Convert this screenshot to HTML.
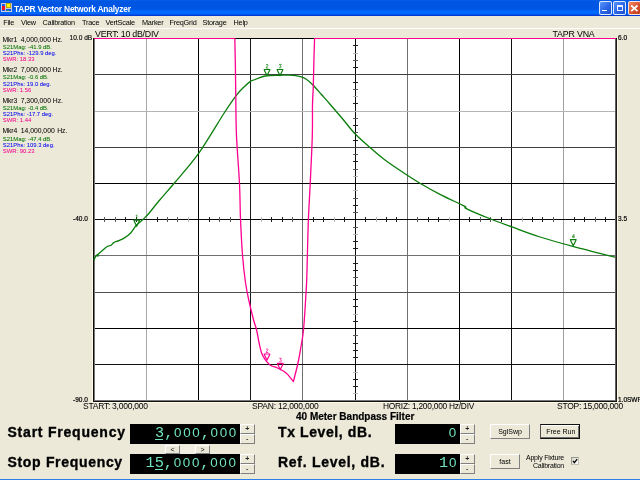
<!DOCTYPE html>
<html><head><meta charset="utf-8">
<style>
*{margin:0;padding:0;box-sizing:border-box}
html,body{width:640px;height:480px;overflow:hidden;background:#ece9d8;font-family:"Liberation Sans",sans-serif;position:relative}
.a{position:absolute;white-space:nowrap;line-height:1}
#title{position:absolute;left:0;top:0;width:640px;height:16px;background:linear-gradient(#0a64ea 0px,#0055e3 1px,#0055e3 9px,#0068fd 11px,#0068fd 14px,#003cd4 15px,#003cd4 16px)}
#ttext{left:14px;top:5px;color:#fff;font-weight:bold;font-size:8.4px;letter-spacing:-0.2px}
.menu{top:19.2px;font-size:7.3px;letter-spacing:-0.22px;color:#000}
#sep{position:absolute;left:0;top:28px;width:640px;height:1px;background:#fff}
.mk{font-size:7.3px;color:#000}
.s{font-size:5.8px}
.g{color:#007000}.b{color:#0000f0}.m{color:#f0008c}
.big{font-weight:bold;font-size:14px;color:#000;-webkit-text-stroke:0.35px #000}
.box{position:absolute;background:#000}
.dig{position:absolute;font-family:"Liberation Mono",monospace;color:#70e4c0;font-size:15.2px;line-height:1;white-space:nowrap}
.spin{position:absolute;background:#ece9d8}
.dc{display:inline-block;width:9.14px;text-align:center}
.z{font-family:"Liberation Sans",sans-serif;font-size:13.4px}
.btn{position:absolute;background:#ece9d8;border:1px solid #fff;border-right-color:#808080;border-bottom-color:#808080;font-size:7px;text-align:center}
.lbl{font-size:7.6px;color:#000}
</style></head><body><div id="wrap" style="position:absolute;left:0;top:0;width:640px;height:480px;overflow:hidden;will-change:transform">
<div id="title"></div>
<div class="a" id="ttext">TAPR Vector Network Analyzer</div>
<div class="a menu" style="left:3.2px">File</div>
<div class="a menu" style="left:21px">View</div>
<div class="a menu" style="left:42.5px">Calibration</div>
<div class="a menu" style="left:82px">Trace</div>
<div class="a menu" style="left:105.5px">VertScale</div>
<div class="a menu" style="left:142px">Marker</div>
<div class="a menu" style="left:169.5px">FreqGrid</div>
<div class="a menu" style="left:202.5px">Storage</div>
<div class="a menu" style="left:233.5px">Help</div>
<div id="sep"></div>

<div class="a" style="left:2.4px;top:36.50px;font-size:6.8px;letter-spacing:-0.1px;-webkit-text-stroke:0.04px #000">Mkr1</div>
<div class="a" style="left:20.7px;top:36.50px;font-size:6.8px;-webkit-text-stroke:0.04px #000">4,000,000</div>
<div class="a" style="left:52.5px;top:36.50px;font-size:6.8px;-webkit-text-stroke:0.04px #000">Hz.</div>
<div class="a g" style="left:2.8px;top:44.71px;font-size:5.9px;-webkit-text-stroke:0.04px currentColor">S21Mag: -41.9 dB.</div>
<div class="a b" style="left:2.8px;top:51.21px;font-size:5.9px;-webkit-text-stroke:0.04px currentColor">S21Phs: -129.9 deg.</div>
<div class="a m" style="left:2.8px;top:57.01px;font-size:5.9px;-webkit-text-stroke:0.04px currentColor">SWR: 18.33</div>
<div class="a" style="left:2.4px;top:67.10px;font-size:6.8px;letter-spacing:-0.1px;-webkit-text-stroke:0.04px #000">Mkr2</div>
<div class="a" style="left:20.7px;top:67.10px;font-size:6.8px;-webkit-text-stroke:0.04px #000">7,000,000</div>
<div class="a" style="left:52.5px;top:67.10px;font-size:6.8px;-webkit-text-stroke:0.04px #000">Hz.</div>
<div class="a g" style="left:2.8px;top:75.31px;font-size:5.9px;-webkit-text-stroke:0.04px currentColor">S21Mag: -0.6 dB.</div>
<div class="a b" style="left:2.8px;top:81.81px;font-size:5.9px;-webkit-text-stroke:0.04px currentColor">S21Phs: 19.0 deg.</div>
<div class="a m" style="left:2.8px;top:87.61px;font-size:5.9px;-webkit-text-stroke:0.04px currentColor">SWR: 1.56</div>
<div class="a" style="left:2.4px;top:97.70px;font-size:6.8px;letter-spacing:-0.1px;-webkit-text-stroke:0.04px #000">Mkr3</div>
<div class="a" style="left:20.7px;top:97.70px;font-size:6.8px;-webkit-text-stroke:0.04px #000">7,300,000</div>
<div class="a" style="left:52.8px;top:97.70px;font-size:6.8px;-webkit-text-stroke:0.04px #000">Hz.</div>
<div class="a g" style="left:2.8px;top:105.91px;font-size:5.9px;-webkit-text-stroke:0.04px currentColor">S21Mag: -0.4 dB.</div>
<div class="a b" style="left:2.8px;top:112.41px;font-size:5.9px;-webkit-text-stroke:0.04px currentColor">S21Phs: -17.7 deg.</div>
<div class="a m" style="left:2.8px;top:118.21px;font-size:5.9px;-webkit-text-stroke:0.04px currentColor">SWR: 1.44</div>
<div class="a" style="left:2.4px;top:128.30px;font-size:6.8px;letter-spacing:-0.1px;-webkit-text-stroke:0.04px #000">Mkr4</div>
<div class="a" style="left:20.7px;top:128.30px;font-size:6.8px;-webkit-text-stroke:0.04px #000">14,000,000</div>
<div class="a" style="left:57.2px;top:128.30px;font-size:6.8px;-webkit-text-stroke:0.04px #000">Hz.</div>
<div class="a g" style="left:2.8px;top:136.51px;font-size:5.9px;-webkit-text-stroke:0.04px currentColor">S21Mag: -47.4 dB.</div>
<div class="a b" style="left:2.8px;top:143.01px;font-size:5.9px;-webkit-text-stroke:0.04px currentColor">S21Phs: 109.3 deg.</div>
<div class="a m" style="left:2.8px;top:148.81px;font-size:5.9px;-webkit-text-stroke:0.04px currentColor">SWR: 90.23</div>
<svg id="plot" style="position:absolute;left:0;top:0" width="640" height="480">
<rect x="93" y="38" width="523" height="364" fill="#fff"/>
<g shape-rendering="crispEdges">
<rect x="146" y="39" width="1" height="361" fill="#a8a8a8"/>
<rect x="198" y="39" width="1" height="361" fill="#000"/>
<rect x="250" y="39" width="1" height="361" fill="#181818"/>
<rect x="302" y="39" width="1" height="361" fill="#707070"/>
<rect x="355" y="39" width="1" height="361" fill="#0a0a0a"/>
<rect x="407" y="39" width="1" height="361" fill="#707070"/>
<rect x="459" y="39" width="1" height="361" fill="#000"/>
<rect x="511" y="39" width="1" height="361" fill="#101010"/>
<rect x="563" y="39" width="1" height="361" fill="#a0a0a0"/>
<rect x="95" y="74" width="520" height="1" fill="#404040"/>
<rect x="95" y="111" width="520" height="1" fill="#b4b4b4"/>
<rect x="95" y="147" width="520" height="1" fill="#404040"/>
<rect x="95" y="183" width="520" height="1" fill="#000"/>
<rect x="95" y="219" width="520" height="1" fill="#0a0a0a"/>
<rect x="95" y="255" width="520" height="1" fill="#707070"/>
<rect x="95" y="292" width="520" height="1" fill="#505050"/>
<rect x="95" y="328" width="520" height="1" fill="#000"/>
<rect x="95" y="364" width="520" height="1" fill="#101010"/>
<rect x="104" y="217" width="1" height="5" fill="#5a5a5a"/>
<rect x="353" y="45" width="5" height="1" fill="#1c1c1c"/>
<rect x="115" y="217" width="1" height="5" fill="#5a5a5a"/>
<rect x="353" y="53" width="5" height="1" fill="#b4b4b4"/>
<rect x="125" y="217" width="1" height="5" fill="#1c1c1c"/>
<rect x="353" y="60" width="5" height="1" fill="#5a5a5a"/>
<rect x="136" y="217" width="1" height="5" fill="#1c1c1c"/>
<rect x="353" y="67" width="5" height="1" fill="#1c1c1c"/>
<rect x="157" y="217" width="1" height="5" fill="#1c1c1c"/>
<rect x="353" y="82" width="5" height="1" fill="#1c1c1c"/>
<rect x="167" y="217" width="1" height="5" fill="#5a5a5a"/>
<rect x="353" y="89" width="5" height="1" fill="#5a5a5a"/>
<rect x="177" y="217" width="1" height="5" fill="#5a5a5a"/>
<rect x="353" y="96" width="5" height="1" fill="#b4b4b4"/>
<rect x="188" y="217" width="1" height="5" fill="#b4b4b4"/>
<rect x="353" y="103" width="5" height="1" fill="#1c1c1c"/>
<rect x="209" y="217" width="1" height="5" fill="#1c1c1c"/>
<rect x="353" y="118" width="5" height="1" fill="#5a5a5a"/>
<rect x="219" y="217" width="1" height="5" fill="#5a5a5a"/>
<rect x="353" y="125" width="5" height="1" fill="#1c1c1c"/>
<rect x="230" y="217" width="1" height="5" fill="#5a5a5a"/>
<rect x="353" y="132" width="5" height="1" fill="#5a5a5a"/>
<rect x="240" y="217" width="1" height="5" fill="#5a5a5a"/>
<rect x="353" y="140" width="5" height="1" fill="#1c1c1c"/>
<rect x="261" y="217" width="1" height="5" fill="#b4b4b4"/>
<rect x="353" y="154" width="5" height="1" fill="#5a5a5a"/>
<rect x="271" y="217" width="1" height="5" fill="#1c1c1c"/>
<rect x="353" y="161" width="5" height="1" fill="#1c1c1c"/>
<rect x="282" y="217" width="1" height="5" fill="#1c1c1c"/>
<rect x="353" y="169" width="5" height="1" fill="#5a5a5a"/>
<rect x="292" y="217" width="1" height="5" fill="#5a5a5a"/>
<rect x="353" y="176" width="5" height="1" fill="#b4b4b4"/>
<rect x="313" y="217" width="1" height="5" fill="#1c1c1c"/>
<rect x="353" y="190" width="5" height="1" fill="#b4b4b4"/>
<rect x="323" y="217" width="1" height="5" fill="#1c1c1c"/>
<rect x="353" y="198" width="5" height="1" fill="#5a5a5a"/>
<rect x="334" y="217" width="1" height="5" fill="#b4b4b4"/>
<rect x="353" y="205" width="5" height="1" fill="#1c1c1c"/>
<rect x="344" y="217" width="1" height="5" fill="#1c1c1c"/>
<rect x="353" y="212" width="5" height="1" fill="#5a5a5a"/>
<rect x="365" y="217" width="1" height="5" fill="#1c1c1c"/>
<rect x="353" y="227" width="5" height="1" fill="#5a5a5a"/>
<rect x="376" y="217" width="1" height="5" fill="#b4b4b4"/>
<rect x="353" y="234" width="5" height="1" fill="#b4b4b4"/>
<rect x="386" y="217" width="1" height="5" fill="#1c1c1c"/>
<rect x="353" y="241" width="5" height="1" fill="#1c1c1c"/>
<rect x="396" y="217" width="1" height="5" fill="#1c1c1c"/>
<rect x="353" y="248" width="5" height="1" fill="#1c1c1c"/>
<rect x="417" y="217" width="1" height="5" fill="#5a5a5a"/>
<rect x="353" y="263" width="5" height="1" fill="#1c1c1c"/>
<rect x="428" y="217" width="1" height="5" fill="#1c1c1c"/>
<rect x="353" y="270" width="5" height="1" fill="#1c1c1c"/>
<rect x="438" y="217" width="1" height="5" fill="#1c1c1c"/>
<rect x="353" y="277" width="5" height="1" fill="#5a5a5a"/>
<rect x="449" y="217" width="1" height="5" fill="#b4b4b4"/>
<rect x="353" y="285" width="5" height="1" fill="#5a5a5a"/>
<rect x="469" y="217" width="1" height="5" fill="#1c1c1c"/>
<rect x="353" y="299" width="5" height="1" fill="#1c1c1c"/>
<rect x="480" y="217" width="1" height="5" fill="#5a5a5a"/>
<rect x="353" y="306" width="5" height="1" fill="#1c1c1c"/>
<rect x="490" y="217" width="1" height="5" fill="#5a5a5a"/>
<rect x="353" y="314" width="5" height="1" fill="#b4b4b4"/>
<rect x="501" y="217" width="1" height="5" fill="#1c1c1c"/>
<rect x="353" y="321" width="5" height="1" fill="#1c1c1c"/>
<rect x="522" y="217" width="1" height="5" fill="#b4b4b4"/>
<rect x="353" y="335" width="5" height="1" fill="#5a5a5a"/>
<rect x="532" y="217" width="1" height="5" fill="#1c1c1c"/>
<rect x="353" y="343" width="5" height="1" fill="#1c1c1c"/>
<rect x="542" y="217" width="1" height="5" fill="#1c1c1c"/>
<rect x="353" y="350" width="5" height="1" fill="#1c1c1c"/>
<rect x="553" y="217" width="1" height="5" fill="#5a5a5a"/>
<rect x="353" y="357" width="5" height="1" fill="#1c1c1c"/>
<rect x="574" y="217" width="1" height="5" fill="#1c1c1c"/>
<rect x="353" y="372" width="5" height="1" fill="#b4b4b4"/>
<rect x="584" y="217" width="1" height="5" fill="#1c1c1c"/>
<rect x="353" y="379" width="5" height="1" fill="#1c1c1c"/>
<rect x="595" y="217" width="1" height="5" fill="#5a5a5a"/>
<rect x="353" y="386" width="5" height="1" fill="#1c1c1c"/>
<rect x="605" y="217" width="1" height="5" fill="#1c1c1c"/>
<rect x="353" y="393" width="5" height="1" fill="#b4b4b4"/>
<rect x="92" y="38" width="1" height="364" fill="#fffbe6"/>
<rect x="617" y="38" width="1" height="364" fill="#fffbe6"/>
<rect x="92" y="402" width="526" height="1" fill="#fffbe6"/>
<rect x="93" y="38" width="1" height="364" fill="#0c0c0c"/>
<rect x="94" y="39" width="1" height="362" fill="#777"/>
<rect x="615" y="39" width="1" height="362" fill="#606060"/>
<rect x="616" y="38" width="1" height="364" fill="#1a1a1a"/>
<rect x="95" y="400" width="520" height="1" fill="#777"/>
<rect x="93" y="401" width="524" height="1" fill="#111"/>
<rect x="93" y="38" width="524" height="1" fill="#000"/>
<rect x="94" y="38" width="141" height="1" fill="#ff0090"/>
<rect x="314" y="38" width="302" height="1" fill="#ff0090"/>
</g>
<path d="M94.00,260.20 C94.23,259.63 94.83,257.70 95.40,256.80 C95.97,255.90 96.28,255.82 97.40,254.80 C98.52,253.78 100.52,252.05 102.10,250.70 C103.68,249.35 105.42,247.60 106.90,246.70 C108.38,245.80 109.87,245.98 111.00,245.30 C112.13,244.62 112.37,243.38 113.70,242.60 C115.03,241.82 117.20,241.38 119.00,240.60 C120.80,239.82 122.68,239.03 124.50,237.90 C126.32,236.77 128.32,235.38 129.90,233.80 C131.48,232.22 132.87,229.87 134.00,228.40 C135.13,226.93 135.13,226.57 136.70,225.00 C138.27,223.43 141.38,220.92 143.40,219.00 C145.42,217.08 146.08,216.67 148.80,213.50 C151.52,210.33 155.43,205.08 159.70,200.00 C163.97,194.92 167.88,190.80 174.40,183.00 C180.92,175.20 190.45,164.95 198.80,153.20 C207.15,141.45 218.18,122.22 224.50,112.50 C230.82,102.78 233.45,99.15 236.70,94.90 C239.95,90.65 241.72,89.25 244.00,87.00 C246.28,84.75 248.63,82.61 250.40,81.40 C252.17,80.19 252.17,80.65 254.60,79.75 C257.03,78.85 260.77,76.74 265.00,76.00 C269.23,75.26 275.83,75.43 280.00,75.30 C284.17,75.17 286.60,74.98 290.00,75.20 C293.40,75.42 297.73,75.97 300.40,76.60 C303.07,77.23 303.92,77.60 306.00,79.00 C308.08,80.40 310.36,82.45 312.90,85.00 C315.44,87.55 318.47,91.18 321.25,94.30 C324.03,97.42 326.06,99.62 329.60,103.70 C333.14,107.78 338.27,113.74 342.50,118.75 C346.73,123.76 350.42,128.96 355.00,133.75 C359.58,138.54 365.00,143.12 370.00,147.50 C375.00,151.88 379.17,155.62 385.00,160.00 C390.83,164.38 399.17,169.88 405.00,173.75 C410.83,177.62 414.17,179.81 420.00,183.25 C425.83,186.69 433.42,190.98 440.00,194.40 C446.58,197.82 455.23,201.68 459.50,203.75 C463.77,205.82 464.38,205.96 465.60,206.80 C466.82,207.64 462.73,206.81 466.80,208.80 C470.87,210.79 482.48,215.73 490.00,218.75 C497.52,221.77 503.57,223.86 511.90,226.90 C520.23,229.94 529.69,233.72 540.00,237.00 C550.31,240.28 561.25,243.23 573.75,246.60 C586.25,249.97 608.12,255.43 615.00,257.20" fill="none" stroke="#0a7d0a" stroke-width="1.3" stroke-linejoin="round"/>
<path d="M234.80,38.00 C234.90,42.83 235.23,56.92 235.40,67.00 C235.57,77.08 235.62,87.00 235.80,98.50 C235.98,110.00 235.88,121.80 236.50,136.00 C237.12,150.20 238.83,169.91 239.50,183.70 C240.17,197.49 240.00,206.87 240.50,218.75 C241.00,230.63 241.67,244.38 242.50,255.00 C243.33,265.62 244.46,275.00 245.50,282.50 C246.54,290.00 247.40,293.75 248.75,300.00 C250.10,306.25 252.29,315.00 253.60,320.00 C254.91,325.00 255.70,326.25 256.60,330.00 C257.50,333.75 258.17,338.67 259.00,342.50 C259.83,346.33 260.60,350.18 261.60,353.00 C262.60,355.82 263.60,357.40 265.00,359.40 C266.40,361.40 267.92,363.57 270.00,365.00 C272.08,366.43 275.21,366.96 277.50,368.00 C279.79,369.04 282.08,370.18 283.75,371.25 C285.42,372.32 285.89,372.67 287.50,374.40 C289.11,376.12 292.42,380.40 293.40,381.60 L293.40,381.60 C294.18,378.42 296.79,368.60 298.10,362.50 C299.41,356.40 300.35,350.42 301.25,345.00 C302.15,339.58 302.77,337.50 303.50,330.00 C304.23,322.50 305.07,308.33 305.60,300.00 C306.13,291.67 306.40,287.60 306.70,280.00 C307.00,272.40 307.12,264.57 307.40,254.40 C307.68,244.23 307.93,230.78 308.40,219.00 C308.87,207.22 309.55,197.53 310.20,183.70 C310.85,169.87 311.92,149.16 312.30,136.00 C312.68,122.84 312.33,113.08 312.50,104.75 C312.67,96.42 313.05,93.96 313.30,86.00 C313.55,78.04 313.78,65.00 314.00,57.00 C314.22,49.00 314.50,41.17 314.60,38.00" fill="none" stroke="#ff0090" stroke-width="1.3" stroke-linejoin="round"/>
<rect x="96.6" y="254.4" width="2.2" height="2.2" fill="#0a7d0a"/>
<path d="M133.40,220.10 L140.00,220.10 M133.90,220.60 L136.70,226.10 L139.50,220.60" fill="none" stroke="#0a7d0a" stroke-width="1.2"/><path transform="translate(135.50,214.80) scale(0.85,0.95)" d="M1.5,0 L1.5,4 M0.6,0.9 L1.5,0" fill="none" stroke="#0a7d0a" stroke-width="0.8"/>
<path d="M263.70,69.50 L270.30,69.50 M264.20,70.00 L267.00,75.50 L269.80,70.00" fill="none" stroke="#0a7d0a" stroke-width="1.2"/><path transform="translate(265.80,64.20) scale(0.85,0.95)" d="M0.2,0.8 Q1.5,-0.6 2.7,0.8 L0.2,4 L3,4" fill="none" stroke="#0a7d0a" stroke-width="0.8"/>
<path d="M276.70,69.50 L283.30,69.50 M277.20,70.00 L280.00,75.50 L282.80,70.00" fill="none" stroke="#0a7d0a" stroke-width="1.2"/><path transform="translate(278.80,64.20) scale(0.85,0.95)" d="M0.2,0.2 L2.8,0.2 L1.3,1.7 Q3,2 2.7,3.3 Q1.8,4.4 0.1,3.7" fill="none" stroke="#0a7d0a" stroke-width="0.8"/>
<path d="M569.95,239.70 L576.55,239.70 M570.45,240.20 L573.25,245.70 L576.05,240.20" fill="none" stroke="#0a7d0a" stroke-width="1.2"/><path transform="translate(572.05,234.40) scale(0.85,0.95)" d="M2.2,4 L2.2,0 L0.1,2.8 L3,2.8" fill="none" stroke="#0a7d0a" stroke-width="0.8"/>
<path d="M263.70,354.00 L270.30,354.00 M264.20,354.50 L267.00,360.00 L269.80,354.50" fill="none" stroke="#ff0090" stroke-width="1.2"/><path transform="translate(265.80,348.70) scale(0.85,0.95)" d="M0.2,0.8 Q1.5,-0.6 2.7,0.8 L0.2,4 L3,4" fill="none" stroke="#ff0090" stroke-width="0.8"/>
<path d="M277.00,363.45 L283.60,363.45 M277.50,363.95 L280.30,369.45 L283.10,363.95" fill="none" stroke="#ff0090" stroke-width="1.2"/><path transform="translate(279.10,358.15) scale(0.85,0.95)" d="M0.2,0.2 L2.8,0.2 L1.3,1.7 Q3,2 2.7,3.3 Q1.8,4.4 0.1,3.7" fill="none" stroke="#ff0090" stroke-width="0.8"/>
</svg>

<!-- title icon & buttons -->
<svg style="position:absolute;left:0;top:0" width="14" height="14" shape-rendering="crispEdges">
<rect x="1" y="3" width="11" height="9" fill="#c8ccd8"/>
<rect x="2" y="4" width="3" height="2" fill="#1a5ff0"/>
<rect x="2" y="6" width="3" height="4" fill="#e8102a"/>
<rect x="2" y="10" width="3" height="1" fill="#1a5ff0"/>
<rect x="6" y="3" width="5" height="5" fill="#b8a800"/>
<rect x="7" y="4" width="3" height="3" fill="#ffff00"/>
<rect x="6" y="9" width="5" height="2" fill="#2050e0"/>
<rect x="7" y="10" width="2" height="1" fill="#20a060"/>
</svg>
<div style="position:absolute;left:599px;top:1px;width:13px;height:14px;border:1px solid rgba(255,255,255,0.85);border-radius:2px;background:linear-gradient(135deg,#5a95fa,#2a66e6 55%,#1d50d0)"></div>
<div style="position:absolute;left:602px;top:9.5px;width:5px;height:1.5px;background:#fff"></div>
<div style="position:absolute;left:613px;top:1px;width:13px;height:14px;border:1px solid rgba(255,255,255,0.85);border-radius:2px;background:linear-gradient(135deg,#5a95fa,#2a66e6 55%,#1d50d0)"></div>
<div style="position:absolute;left:617px;top:5px;width:6px;height:6px;border:1px solid rgba(255,255,255,0.9);border-top-width:2px"></div>
<div style="position:absolute;left:628px;top:1px;width:13px;height:14px;border:1px solid rgba(255,255,255,0.85);border-radius:2px;background:linear-gradient(135deg,#f08a68,#d8502c 55%,#c03818)"></div>
<svg style="position:absolute;left:628px;top:1px" width="13" height="14"><path d="M3.2,4.5 L9.5,10.2 M9.5,4.5 L3.2,10.2" stroke="#fff" stroke-width="1.7"/></svg>

<!-- plot labels -->
<div class="a" style="left:69.5px;top:35px;font-size:6.6px;color:#000;-webkit-text-stroke:0.12px #000">10.0 dB</div>
<div class="a lbl" style="left:95px;top:30px;font-size:8.8px;letter-spacing:-0.24px">VERT: 10 dB/DIV</div>
<div class="a lbl" style="left:552.5px;top:30px;font-size:8.8px;letter-spacing:-0.16px">TAPR VNA</div>
<div class="a" style="left:618px;top:35px;font-size:6.5px;-webkit-text-stroke:0.2px #000">6.0</div>
<div class="a" style="left:73px;top:215.5px;font-size:6.5px;-webkit-text-stroke:0.2px #000">-40.0</div>
<div class="a" style="left:618px;top:215.5px;font-size:6.5px;-webkit-text-stroke:0.2px #000">3.5</div>
<div class="a" style="left:73px;top:397px;font-size:6.5px;-webkit-text-stroke:0.2px #000">-90.0</div>
<div class="a" style="left:618px;top:397px;font-size:6.5px;-webkit-text-stroke:0.2px #000">1.0SWR</div>
<div class="a lbl" style="left:83px;top:401.8px;font-size:8.5px;letter-spacing:-0.25px">START: 3,000,000</div>
<div class="a lbl" style="left:252px;top:401.8px;font-size:8.5px;letter-spacing:-0.2px">SPAN: 12,000,000</div>
<div class="a lbl" style="left:383px;top:401.8px;font-size:8.4px;letter-spacing:-0.25px">HORIZ: 1,200,000 Hz/DIV</div>
<div class="a lbl" style="left:557px;top:401.8px;font-size:8.5px;letter-spacing:-0.27px">STOP: 15,000,000</div>
<div class="a" style="left:296px;top:411.5px;font-size:10px;font-weight:bold;-webkit-text-stroke:0.2px #000">40 Meter Bandpass Filter</div>

<!-- bottom controls -->
<div class="a big" style="left:7.5px;top:425px;letter-spacing:0.78px">Start Frequency</div>
<div class="a big" style="left:7.5px;top:455px;letter-spacing:0.68px">Stop Frequency</div>
<div class="a big" style="left:278px;top:424.5px;letter-spacing:0.6px">Tx Level, dB.</div>
<div class="a big" style="left:278px;top:454.5px;letter-spacing:0.72px">Ref. Level, dB.</div>

<div class="box" style="left:130px;top:424px;width:110px;height:20px"></div>
<div class="dig" style="left:155px;top:426px"><span class="dc">3</span><span class="dc">,</span><span class="dc z">0</span><span class="dc z">0</span><span class="dc z">0</span><span class="dc">,</span><span class="dc z">0</span><span class="dc z">0</span><span class="dc z">0</span></div>
<div style="position:absolute;left:155px;top:439px;width:8px;height:1px;background:#6fe0b8"></div>
<div class="box" style="left:130px;top:454px;width:110px;height:20px"></div>
<div class="dig" style="left:145.5px;top:456px"><span class="dc">1</span><span class="dc">5</span><span class="dc">,</span><span class="dc z">0</span><span class="dc z">0</span><span class="dc z">0</span><span class="dc">,</span><span class="dc z">0</span><span class="dc z">0</span><span class="dc z">0</span></div>
<div style="position:absolute;left:155px;top:469px;width:8px;height:1px;background:#6fe0b8"></div>

<div class="box" style="left:395px;top:424px;width:65px;height:20px"></div>
<div class="dig" style="left:448px;top:426px"><span class="dc z">0</span></div>
<div class="box" style="left:395px;top:454px;width:65px;height:20px"></div>
<div class="dig" style="left:439px;top:456px"><span class="dc">1</span><span class="dc z">0</span></div>

<!-- spinners -->
<div class="btn" style="left:240px;top:424px;width:14.5px;height:10px;font-size:7px;font-weight:bold;line-height:8px;color:#222">+</div>
<div class="btn" style="left:240px;top:434px;width:14.5px;height:10px;font-size:7px;font-weight:bold;line-height:7px;color:#444">-</div>
<div class="btn" style="left:240px;top:454px;width:14.5px;height:10px;font-size:7px;font-weight:bold;line-height:8px;color:#222">+</div>
<div class="btn" style="left:240px;top:464px;width:14.5px;height:10px;font-size:7px;font-weight:bold;line-height:7px;color:#444">-</div>
<div class="btn" style="left:460px;top:424px;width:14.5px;height:10px;font-size:7px;font-weight:bold;line-height:8px;color:#222">+</div>
<div class="btn" style="left:460px;top:434px;width:14.5px;height:10px;font-size:7px;font-weight:bold;line-height:7px;color:#444">-</div>
<div class="btn" style="left:460px;top:454px;width:14.5px;height:10px;font-size:7px;font-weight:bold;line-height:8px;color:#222">+</div>
<div class="btn" style="left:460px;top:464px;width:14.5px;height:10px;font-size:7px;font-weight:bold;line-height:7px;color:#444">-</div>

<!-- scroll -->
<div class="btn" style="left:165px;top:444.5px;width:15px;height:9px;font-size:7px;line-height:7px">&lt;</div>
<div style="position:absolute;left:180px;top:444.5px;width:15px;height:9px;background:#f1efe2"></div>
<div class="btn" style="left:195px;top:444.5px;width:15px;height:9px;font-size:7px;line-height:7px">&gt;</div>

<!-- buttons -->
<div class="btn" style="left:490px;top:424px;width:40px;height:15px;line-height:13px">SglSwp</div>
<div class="btn" style="left:540px;top:424px;width:40px;height:15px;line-height:13px;padding-left:1.5px;border:1px solid #111;border-left-color:#505050;box-shadow:inset 0 1px #fff,inset -1px -1px #707070">Free Run</div>
<div class="btn" style="left:490px;top:454px;width:30px;height:15px;line-height:13px">fast</div>
<div class="a" style="left:526px;top:453.7px;font-size:7px;letter-spacing:-0.22px">Apply Fixture</div>
<div class="a" style="left:533px;top:461.5px;font-size:7px;letter-spacing:-0.22px">Calibration</div>
<div style="position:absolute;left:571px;top:457px;width:8px;height:8px;background:linear-gradient(135deg,#d6d5cc,#f4f4f0 70%,#fff);border:1px solid #9a9890;border-right-color:#c4c2b8;border-bottom-color:#c4c2b8"></div>
<svg style="position:absolute;left:571px;top:457px" width="8" height="8"><path d="M2,3.8 L3.4,5.6 L6.2,2.2" fill="none" stroke="#000" stroke-width="1.3"/></svg>
<div style="position:absolute;left:0;top:479px;width:640px;height:1px;background:#2a80e8"></div>


</div></body></html>
